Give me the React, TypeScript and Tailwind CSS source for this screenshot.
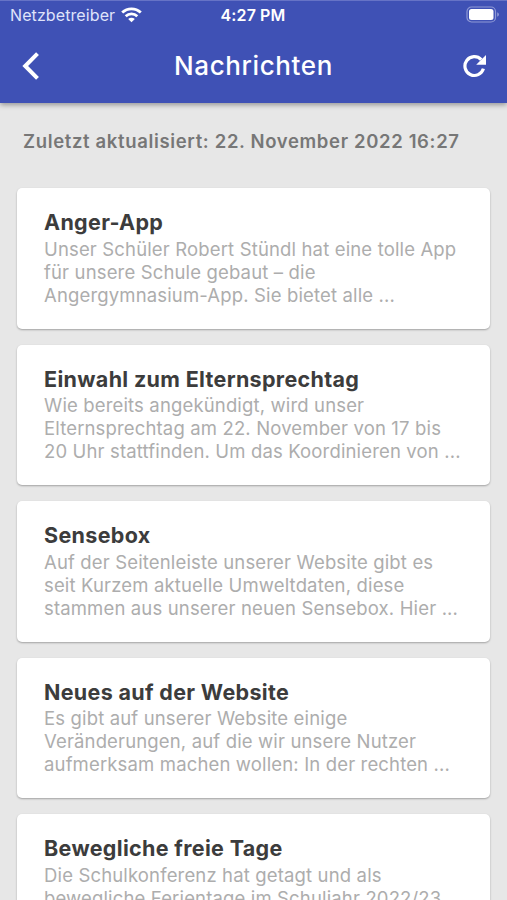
const news = [
  {
    title: "Anger-App",
    lines: [
      "Unser Schüler Robert Stündl hat eine tolle App",
      "für unsere Schule gebaut – die",
      "Angergymnasium-App. Sie bietet alle ...",
    ],
  },
  {
    title: "Einwahl zum Elternsprechtag",
    lines: [
      "Wie bereits angekündigt, wird unser",
      "Elternsprechtag am 22. November von 17 bis",
      "20 Uhr stattfinden. Um das Koordinieren von ...",
    ],
  },
  {
    title: "Sensebox",
    lines: [
      "Auf der Seitenleiste unserer Website gibt es",
      "seit Kurzem aktuelle Umweltdaten, diese",
      "stammen aus unserer neuen Sensebox. Hier ...",
    ],
  },
  {
    title: "Neues auf der Website",
    lines: [
      "Es gibt auf unserer Website einige",
      "Veränderungen, auf die wir unsere Nutzer",
      "aufmerksam machen wollen: In der rechten ...",
    ],
  },
  {
    title: "Bewegliche freie Tage",
    lines: [
      "Die Schulkonferenz hat getagt und als",
      "bewegliche Ferientage im Schuljahr 2022/23",
    ],
  },
];

function WifiIcon() {
  return (
    <svg width="21" height="16" viewBox="0 0 21 16" fill="none" stroke="white" strokeWidth="2.8">
      <path d="M1.2 5.6C6.5 0.6 14.5 0.6 19.8 5.6" />
      <path d="M4.7 9.2C8 6.1 13 6.1 16.3 9.2" />
      <path d="M10.5 15.3L7.2 12C9.1 10.3 11.9 10.3 13.8 12Z" fill="white" stroke="none" />
    </svg>
  );
}

function BatteryIcon() {
  return (
    <svg width="34" height="17" viewBox="0 0 34 17" fill="none">
      <rect x="1" y="1" width="28.5" height="15" rx="4.5" stroke="#8f99d6" strokeWidth="1.2" />
      <rect x="3" y="3" width="24.5" height="11" rx="2.5" fill="white" />
      <path d="M31.2 6.3Q33 7 33 8.5T31.2 10.7Z" fill="#8f99d6" />
    </svg>
  );
}

function Header() {
  return (
    <header className="relative z-10 h-[103px] bg-[#3f51b5] text-white shadow-[0_2px_5px_rgba(0,0,0,0.35)] border-t border-[#6673c6]">
      <div className="grid h-[27px] grid-cols-3 items-center pl-[10px] pr-[7px] text-base leading-none">
        <div className="flex items-center gap-[6px] text-[#dfe3fa]">
          <span className="tracking-[0.1px]">Netzbetreiber</span>
          <WifiIcon />
        </div>
        <span className="pr-[4px] text-center font-semibold tracking-[0.1px]">4:27 PM</span>
        <div className="flex justify-end">
          <BatteryIcon />
        </div>
      </div>
      <div className="flex h-[75px] items-center justify-between pl-[22px] pr-[20px]">
        <button aria-label="Zurück">
          <svg width="18" height="28" viewBox="0 0 18 28" fill="none" stroke="white" strokeWidth="4">
            <path d="M15.5 1.7L3.2 14L15.5 26.3" />
          </svg>
        </button>
        <h1 className="pl-[4px] text-[26px] font-medium tracking-[0.6px]">Nachrichten</h1>
        <button aria-label="Aktualisieren">
          <svg width="24" height="24" viewBox="0 0 24 24" fill="none">
            <path d="M20.4 14.6A9.4 9.4 0 1 1 18.2 5.6" stroke="white" strokeWidth="3.2" />
            <path d="M23 1V10.8H13.2Z" fill="white" />
          </svg>
        </button>
      </div>
    </header>
  );
}

function NewsCard({ title, lines }: { title: string; lines: string[] }) {
  return (
    <article className="h-[140.4px] shrink-0 rounded-[5px] bg-white px-[27px] pt-[20px] shadow-[0_1px_2px_rgba(0,0,0,0.3)]">
      <h2 className="mb-[0.6px] text-[21.5px] leading-[29px] font-bold tracking-[0.33px] text-[#3c3c3c]">
        {title}
      </h2>
      <p className="text-[18.5px] leading-[23px] tracking-[0.15px] whitespace-nowrap text-[#adadad]">
        {lines.map((line) => (
          <span key={line} className="block">
            {line}
          </span>
        ))}
      </p>
    </article>
  );
}

export default function App() {
  return (
    <div className="flex h-[900px] w-[507px] flex-col overflow-hidden bg-[#e7e7e7] font-[Inter,sans-serif]">
      <Header />
      <p className="pt-[25px] pl-[23px] text-[18.5px] leading-[27px] font-semibold tracking-[0.65px] text-[#777777]">
        Zuletzt aktualisiert: 22. November 2022 16:27
      </p>
      <main className="flex flex-col gap-4 px-[17px] pt-[33.4px]">
        {news.map((item) => (
          <NewsCard key={item.title} title={item.title} lines={item.lines} />
        ))}
      </main>
    </div>
  );
}
